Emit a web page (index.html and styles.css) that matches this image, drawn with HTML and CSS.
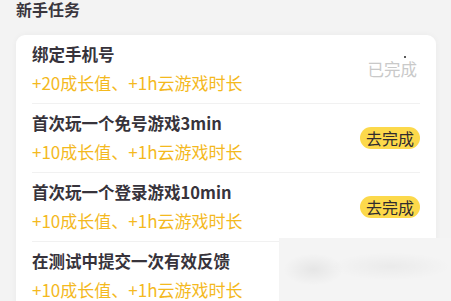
FILE: index.html
```html
<!DOCTYPE html>
<html lang="zh">
<head>
<meta charset="utf-8">
<link rel="stylesheet" href="styles.css">
</head>
<body>
<div class="page">
  <h2 class="section-title">新手任务</h2>
  <div class="card">
    <div class="task">
      <div class="info">
        <div class="name">绑定手机号</div>
        <div class="reward">+20成长值、+1h云游戏时长</div>
      </div>
      <span class="done">已完成</span>
    </div>
    <div class="task">
      <div class="info">
        <div class="name">首次玩一个免号游戏3min</div>
        <div class="reward">+10成长值、+1h云游戏时长</div>
      </div>
      <span class="go">去完成</span>
    </div>
    <div class="task">
      <div class="info">
        <div class="name">首次玩一个登录游戏10min</div>
        <div class="reward">+10成长值、+1h云游戏时长</div>
      </div>
      <span class="go">去完成</span>
    </div>
    <div class="task">
      <div class="info">
        <div class="name">在测试中提交一次有效反馈</div>
        <div class="reward">+10成长值、+1h云游戏时长</div>
      </div>
    </div>
  </div>
  <div class="blur"></div>
  <div class="cursor-dot"></div>
</div>
</body>
</html>
```
FILE: styles.css
```css
html, body {
  margin: 0;
  padding: 0;
  background: #f3f3f3;
}
.page {
  position: relative;
  width: 451px;
  height: 301px;
  overflow: hidden;
  font-family: "Noto Sans CJK SC", "Noto Sans", sans-serif;
}
.section-title {
  margin: 0;
  padding: 1px 16px 0;
  height: 34px;
  font-size: 16px;
  line-height: 17px;
  font-weight: 700;
  color: #3a363d;
}
.card {
  margin: 0 15px 0 16px;
  background: #fff;
  border-radius: 9px;
  box-shadow: 0 0 6px rgba(0,0,0,0.04);
  padding: 0 16px;
}
.task {
  display: flex;
  align-items: center;
  justify-content: space-between;
  padding: 8px 0 9px;
  border-bottom: 1px solid #f1f1f1;
}
.task:last-child {
  border-bottom: none;
}
.info {
  display: flex;
  flex-direction: column;
  gap: 5px;
}
.name {
  font-size: 16.5px;
  line-height: 23px;
  font-weight: 700;
  color: #37333b;
}
.reward {
  font-size: 17px;
  line-height: 23px;
  color: #f4b91e;
}
.done {
  font-size: 16.5px;
  line-height: 20px;
  color: #c9c9c9;
  margin-right: 3px;
}
.go {
  background: #fcd94b;
  color: #2f2b2f;
  font-size: 16px;
  line-height: 22px;
  padding: 0 6px;
  border-radius: 11px;
}
.blur {
  position: absolute;
  left: 279px;
  top: 238px;
  right: 0;
  bottom: 0;
  background:
    radial-gradient(ellipse 30px 16px at 20% 50%, rgba(0,0,0,0.06), transparent),
    radial-gradient(ellipse 60px 14px at 65% 45%, rgba(0,0,0,0.04), transparent),
    #f4f4f4;
}
.cursor-dot {
  position: absolute;
  left: 404px;
  top: 56px;
  width: 2px;
  height: 2px;
  background: #222;
  border-radius: 1px;
}
```
